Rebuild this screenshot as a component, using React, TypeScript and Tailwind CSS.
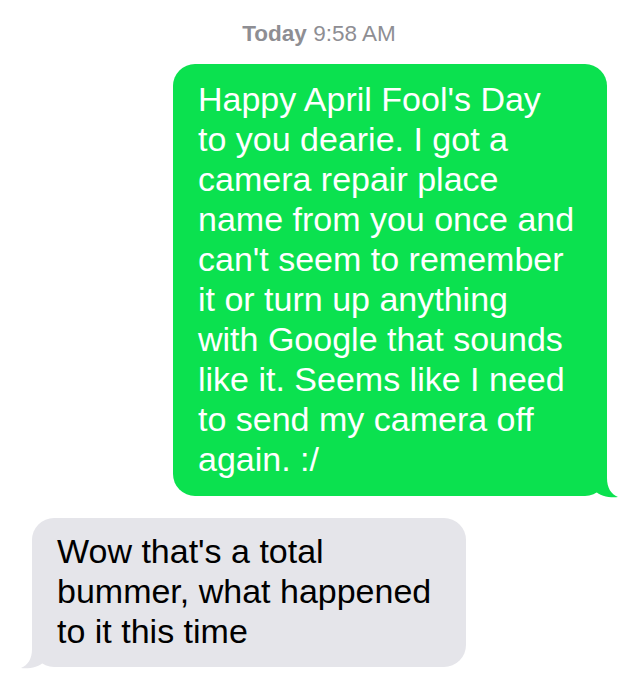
import React from 'react';

const sent = [
  "Happy April Fool's Day",
  'to you dearie. I got a',
  'camera repair place',
  'name from you once and',
  "can't seem to remember",
  'it or turn up anything',
  'with Google that sounds',
  'like it. Seems like I need',
  'to send my camera off',
  'again. :/',
];

const received = ["Wow that's a total", 'bummer, what happened', 'to it this time'];

// bubble tail, drawn for the right-hand side; mirrored for the left
const Tail: React.FC<{ color: string; className: string }> = ({ color, className }) => (
  <svg width="34" height="34" viewBox="0 0 34 34" className={className}>
    <path d="M21 8 L21 12 C21 22 25 28 32 31 C25 32 14 30.5 8 24 L8 8 Z" fill={color} />
  </svg>
);

export default function App() {
  return (
    <div className="min-h-[682px] w-full bg-white flex flex-col" style={{ fontFamily: '"Liberation Sans", Arial, sans-serif' }}>
      <div className="pt-[21px] pl-[8px] text-center text-[22.5px] leading-[26px] text-[#8e8e93]">
        <span className="font-bold">Today</span> 9:58 AM
      </div>

      <div className="self-end mr-[23px] mt-[17px] relative">
        <div className="w-[434px] rounded-[22px] bg-[#0be14f] pl-[25px] pt-[15px] pb-[17px] text-[34px] leading-[40px] text-white">
          {sent.map(line => (
            <div key={line} className="whitespace-nowrap">{line}</div>
          ))}
        </div>
        <Tail color="#0be14f" className="absolute right-[-13px] bottom-[-4px]" />
      </div>

      <div className="self-start ml-[32px] mt-[22px] relative">
        <div className="w-[434px] rounded-[22px] bg-[#e5e5ea] pl-[25px] pt-[13px] pb-[16px] text-[34px] leading-[40px] text-black">
          {received.map(line => (
            <div key={line} className="whitespace-nowrap">{line}</div>
          ))}
        </div>
        <Tail color="#e5e5ea" className="absolute left-[-13px] bottom-[-4px] -scale-x-100" />
      </div>
    </div>
  );
}
